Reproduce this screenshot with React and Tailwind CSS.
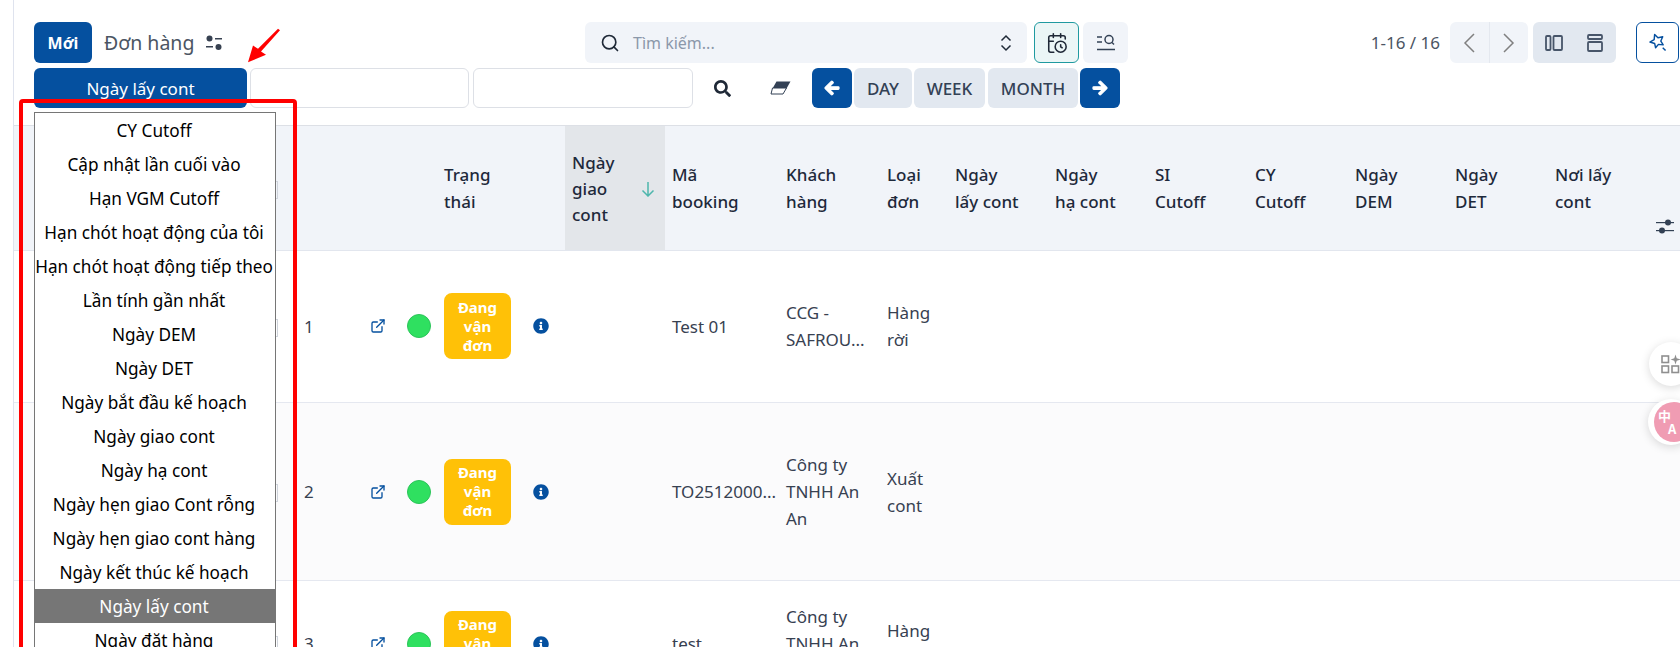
import React from 'react';
import { CalendarClock, ExternalLink, Search } from 'lucide-react';
import { FaArrowLeft, FaArrowRight, FaInfoCircle, FaSearch } from 'react-icons/fa';

const dateFields = [
    'CY Cutoff',
    'Cập nhật lần cuối vào',
    'Hạn VGM Cutoff',
    'Hạn chót hoạt động của tôi',
    'Hạn chót hoạt động tiếp theo',
    'Lần tính gần nhất',
    'Ngày DEM',
    'Ngày DET',
    'Ngày bắt đầu kế hoạch',
    'Ngày giao cont',
    'Ngày hạ cont',
    'Ngày hẹn giao Cont rỗng',
    'Ngày hẹn giao cont hàng',
    'Ngày kết thúc kế hoạch',
    'Ngày lấy cont',
    'Ngày đặt hàng',
];

const colWidths = [282, 59, 40, 39, 131, 100, 114, 101, 68, 100, 100, 100, 100, 100, 100, 100, 32];

const plainHeaders = [
    ['Mã', 'booking'],
    ['Khách', 'hàng'],
    ['Loại', 'đơn'],
    ['Ngày', 'lấy cont'],
    ['Ngày', 'hạ cont'],
    ['SI', 'Cutoff'],
    ['CY', 'Cutoff'],
    ['Ngày', 'DEM'],
    ['Ngày', 'DET'],
    ['Nơi lấy', 'cont'],
];

const orders = [
    { no: 1, booking: 'Test 01', customer: ['CCG -', 'SAFROU...'], type: ['Hàng', 'rời'], row: 'h-[152px] bg-white [&>td]:pb-px' },
    { no: 2, booking: 'TO2512000...', customer: ['Công ty', 'TNHH An', 'An'], type: ['Xuất', 'cont'], row: 'h-[178px] bg-[#fbfbfc]' },
    { no: 3, booking: 'test', customer: ['Công ty', 'TNHH An', 'An'], type: ['Hàng', 'rời'], row: 'h-[126px] bg-white' },
];

const SliderIcon = ({ className }) => (
    <svg viewBox="0 0 18 16" className={className} fill="currentColor">
        <rect x="0" y="3" width="18" height="1.2" />
        <rect x="0" y="11" width="18" height="1.2" />
        <circle cx="12" cy="3.5" r="3" />
        <circle cx="6" cy="11.5" r="3" />
    </svg>
);

const FilterIcon = () => (
    <svg viewBox="0 0 16 16" className="w-4 h-4 text-[#374151]" fill="currentColor">
        <circle cx="3.5" cy="3.5" r="3" />
        <rect x="9" y="3" width="7" height="1.5" />
        <rect x="0" y="11" width="7" height="1.5" />
        <circle cx="12.5" cy="12" r="3" />
    </svg>
);

const SearchPanelIcon = () => (
    <svg viewBox="0 0 20 20" className="w-5 h-5" fill="none" stroke="#334155" strokeWidth="1.5">
        <path d="M1 4h5M1 9h5M1 16.5h18" />
        <circle cx="13" cy="6.5" r="4" />
        <path d="M16 9.5l2 2" />
    </svg>
);

const EraserIcon = () => (
    <svg viewBox="0 0 21 14" className="w-[21px] h-3.5">
        <path d="M6.500 .5H20.500L16.500 7.500H2.500z" fill="#334155" />
        <path d="M2.500 7H16.500L13 13H1z" fill="#fff" stroke="#334155" strokeWidth="1" />
    </svg>
);

const StarWandIcon = () => (
    <svg viewBox="0 0 20 20" className="w-[19px] h-[19px]" fill="none" stroke="#05509f" strokeWidth="1.500" strokeLinejoin="round">
        <path d="M7 1.500l3.500 3.500 5-1-2 4.500 2.500 4-5-.5-3 3.500-1-4.500-5-1.500 4.500-2.500z" />
        <path d="M15.500 15.500l3 3" />
    </svg>
);

const UpDownIcon = () => (
    <svg viewBox="0 0 12 18" className="w-3 h-[18px]" fill="none" stroke="#1f2937" strokeWidth="1.5">
        <path d="M1.500 6.500L6 2l4.500 4.500M1.500 11.500L6 16l4.500-4.500" />
    </svg>
);

const GridSparkIcon = () => (
    <svg viewBox="0 0 20 20" className="w-5 h-5" fill="none" stroke="#8f8f8f" strokeWidth="1.6">
        <rect x="1" y="2" width="6.500" height="6.500" />
        <rect x="1" y="12" width="6.500" height="6.500" />
        <rect x="11" y="12" width="6.500" height="6.500" />
        <path d="M14.500 .5l1.200 3.800 3.800 1.200-3.800 1.200-1.200 3.800-1.200-3.800-3.800-1.200 3.800-1.200z" fill="#8f8f8f" stroke="none" />
    </svg>
);

const App = () => {
    return (
        <div className="relative h-screen overflow-hidden bg-white text-[17px] leading-[27px] text-[#374151] font-['Noto_Sans',sans-serif]">
            <div className="ml-[13px] border-l border-[#dfe3ee] h-full">
                {/* Panel de control */}
                <div className="h-[126px] border-b border-[#dde0e6] pt-[22px]">
                    <div className="flex items-center h-[41px] pl-5 pr-px">
                        <div className="flex items-center w-[551px]">
                            <button className="w-[58px] h-[41px] rounded-md bg-[#05509f] text-white font-bold text-base">Mới</button>
                            <span className="ml-3 text-[19.5px] text-[#4b5563]">Đơn hàng</span>
                            <span className="ml-3"><FilterIcon /></span>
                        </div>
                        <div className="flex items-center w-[442px] h-[41px] rounded-md bg-[#f1f4f9] px-[15px]">
                            <Search size={20} strokeWidth={2} className="text-[#1f2937]" />
                            <span className="ml-[13px] flex-1 text-[#8b98aa] text-base">Tìm kiếm...</span>
                            <UpDownIcon />
                        </div>
                        <button className="ml-[7px] w-[45px] h-[41px] rounded-md bg-[#ebf6f6] border border-[#1f9aa0] flex items-center justify-center">
                            <CalendarClock size={22} strokeWidth={1.7} className="text-[#1f2937]" />
                        </button>
                        <button className="ml-1 w-[45px] h-[41px] rounded-md bg-[#f1f4f9] flex items-center justify-center">
                            <SearchPanelIcon />
                        </button>
                        <span className="ml-auto text-[#4b5563]">1-16 / 16</span>
                        <div className="ml-[10px] flex w-[78px] h-[41px] rounded-md bg-[#f1f4f9] text-[#808080]">
                            <div className="flex-1 flex items-center justify-center border-r border-[#e4e8ef]">
                                <svg viewBox="0 0 12 20" className="w-3 h-5" fill="none" stroke="currentColor" strokeWidth="1.500"><path d="M11 1L2 10l9 9" /></svg>
                            </div>
                            <div className="flex-1 flex items-center justify-center">
                                <svg viewBox="0 0 12 20" className="w-3 h-5" fill="none" stroke="currentColor" strokeWidth="1.500"><path d="M1 1l9 9-9 9" /></svg>
                            </div>
                        </div>
                        <div className="ml-[5px] flex w-[83px] h-[41px] rounded-md bg-[#e2e8f0]">
                            <div className="flex-1 flex items-center justify-center">
                                <svg viewBox="0 0 18 18" className="w-[18px] h-[18px]" fill="none" stroke="#475569" strokeWidth="1.800">
                                    <rect x="1" y="2" width="4.500" height="14" rx="1" />
                                    <rect x="8.500" y="2" width="8.500" height="14" rx="1" />
                                </svg>
                            </div>
                            <div className="flex-1 flex items-center justify-center">
                                <svg viewBox="0 0 18 18" className="w-[18px] h-[18px]" fill="none" stroke="#475569" strokeWidth="1.800">
                                    <rect x="2" y="1" width="14" height="4" rx="1" />
                                    <rect x="2" y="8" width="14" height="9" rx="1" />
                                </svg>
                            </div>
                        </div>
                        <button className="ml-5 w-[43px] h-[41px] rounded-md border border-[#05509f] flex items-center justify-center">
                            <StarWandIcon />
                        </button>
                    </div>
                    <div className="flex items-center h-10 mt-[5px] pl-5">
                        <button className="w-[213px] h-10 rounded-md bg-[#05509f] text-white">Ngày lấy cont</button>
                        <div className="ml-[3px] w-[219px] h-10 rounded-md border border-[#dde0e6]"></div>
                        <div className="ml-1 w-[220px] h-10 rounded-md border border-[#dde0e6]"></div>
                        <div className="w-[119px] flex items-center">
                            <FaSearch size={17} className="ml-[21px] text-[#1f2937]" />
                            <span className="ml-[39px]"><EraserIcon /></span>
                        </div>
                        <button className="w-10 h-10 rounded-md bg-[#05509f] flex items-center justify-center text-white"><FaArrowLeft size={16} stroke="currentColor" strokeWidth={40} /></button>
                        <button className="ml-0.5 w-[58px] h-10 rounded-md bg-[#e2e8f0] text-[#334155] font-medium">DAY</button>
                        <button className="ml-0.5 w-[71px] h-10 rounded-md bg-[#e2e8f0] text-[#334155] font-medium">WEEK</button>
                        <button className="ml-[3px] w-[90px] h-10 rounded-md bg-[#e2e8f0] text-[#334155] font-medium">MONTH</button>
                        <button className="ml-0.5 w-10 h-10 rounded-md bg-[#05509f] flex items-center justify-center text-white"><FaArrowRight size={16} stroke="currentColor" strokeWidth={40} /></button>
                    </div>
                </div>

                {/* Tabla de pedidos */}
                <table className="table-fixed w-[1666px] border-separate border-spacing-0">
                    <colgroup>
                        {colWidths.map((w, i) => <col key={i} style={{ width: w }} />)}
                    </colgroup>
                    <thead>
                        <tr className="h-[125px] bg-[#f1f4f9] text-[#1e293b] font-medium text-left align-middle">
                            <th className="border-b border-[#e2e6ee] font-medium text-right pr-[18px]">
                                <span className="inline-block w-[18px] h-[18px] border border-[#cfd4dc] align-middle"></span>
                            </th>
                            <th className="border-b border-[#e2e6ee]" colSpan={3}></th>
                            <th className="border-b border-[#e2e6ee] font-medium pl-2.5 leading-[27px]">Trạng<br />thái</th>
                            <th className="border-b border-[#e2e6ee] font-medium bg-[#e3e6ea] pl-[7px] pt-0.5">
                                <div className="flex items-center leading-[26px]">
                                    <span className="w-[69px]">Ngày<br />giao<br />cont</span>
                                    <svg viewBox="0 0 14 16" className="w-3.5 h-4" fill="none" stroke="#4db6ac" strokeWidth="1.500"><path d="M7 1v14M1.500 9.500L7 15l5.500-5.500" /></svg>
                                </div>
                            </th>
                            {plainHeaders.map((lines, i) => (
                                <th key={i} className="border-b border-[#e2e6ee] font-medium pl-[7px]">{lines[0]}<br />{lines[1]}</th>
                            ))}
                            <th className="border-b border-[#e2e6ee] align-bottom pb-[15px]">
                                <SliderIcon className="w-[18px] h-4 ml-2 text-[#334155]" />
                            </th>
                        </tr>
                    </thead>
                    <tbody>
                        {orders.map(order => (
                            <tr key={order.no} className={order.row}>
                                <td className="border-b border-[#e5e8f0] text-right pr-[18px]">
                                    <span className="inline-block w-[18px] h-[18px] border border-[#cfd4dc] align-middle"></span>
                                </td>
                                <td className="border-b border-[#e5e8f0] pl-2">{order.no}</td>
                                <td className="border-b border-[#e5e8f0] pl-[15px]">
                                    <ExternalLink size={16} strokeWidth={2} className="text-[#05509f]" />
                                </td>
                                <td className="border-b border-[#e5e8f0] pl-3">
                                    <span className="block w-6 h-6 rounded-full bg-[#2fe060] border border-[#2cc45a]"></span>
                                </td>
                                <td className="border-b border-[#e5e8f0] pl-2.5">
                                    <div className="flex items-center">
                                        <span className="w-[67px] h-[66px] rounded-lg bg-[#ffc107] text-white font-bold text-[15px] leading-[19px] text-center flex items-center justify-center">Đang<br />vận<br />đơn</span>
                                        <FaInfoCircle size={16} className="ml-[22px] text-[#05509f]" />
                                    </div>
                                </td>
                                <td className="border-b border-[#e5e8f0]"></td>
                                <td className="border-b border-[#e5e8f0] pl-[7px] whitespace-nowrap overflow-hidden">{order.booking}</td>
                                <td className="border-b border-[#e5e8f0] pl-[7px]">{order.customer.map((l, i) => <div key={i}>{l}</div>)}</td>
                                <td className="border-b border-[#e5e8f0] pl-[7px]">{order.type.map((l, i) => <div key={i}>{l}</div>)}</td>
                                {[0, 1, 2, 3, 4, 5, 6, 7].map(i => <td key={i} className="border-b border-[#e5e8f0]"></td>)}
                            </tr>
                        ))}
                    </tbody>
                </table>
            </div>

            {/* Desplegable de campos de fecha */}
            <div className="absolute left-[34px] top-[112px] w-[242px] pr-0.5 border border-[#767676] bg-white text-black text-[17.2px]">
                {dateFields.map(name => (
                    <div key={name} className={`h-[34px] -mr-0.5 pr-0.5 leading-[36px] text-center whitespace-nowrap ${name === 'Ngày lấy cont' ? 'bg-[#767676] text-white' : ''}`}>{name}</div>
                ))}
            </div>

            {/* Anotación roja */}
            <div className="absolute left-[19px] top-[99px] w-[278px] h-[600px] border-4 border-[#ff0000] rounded-sm pointer-events-none"></div>
            <svg viewBox="0 0 40 44" preserveAspectRatio="none" className="absolute left-[246px] top-[27px] w-10 h-[37px]" fill="#ff0000">
                <path d="M32 2l2 2-19 25 5 4L2 42l5-20 5 4z" />
            </svg>

            {/* Botones flotantes */}
            <div className="absolute left-[1649px] top-[342px] w-11 h-11 rounded-full bg-white shadow-[0_2px_10px_rgba(0,0,0,0.15)] flex items-center pl-[12px]">
                <GridSparkIcon />
            </div>
            <div className="absolute left-[1648px] top-[399px] w-[46px] h-[46px] rounded-full bg-white shadow-[0_2px_10px_rgba(0,0,0,0.15)] flex items-center pl-1.5">
                <span className="w-10 h-10 rounded-full bg-[#f09cb3] text-white text-[13px] leading-[13px] font-bold font-['Noto_Sans_CJK_SC',sans-serif] pl-1 pt-[7px]">
                    <span className="block">中</span>
                    <span className="block pl-2.5">A</span>
                </span>
            </div>
        </div>
    );
};

export default App;
